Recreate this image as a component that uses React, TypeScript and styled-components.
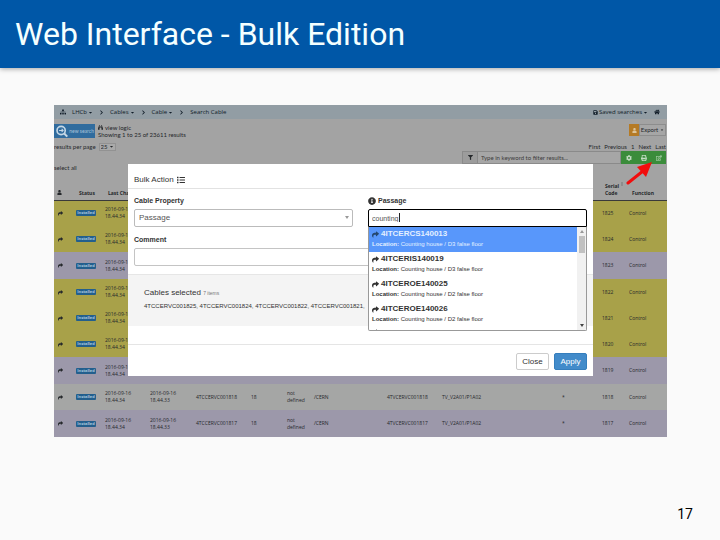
import React from "react";
import styled, { createGlobalStyle, css } from "styled-components";
import {
  FaBinoculars,
  FaCaretDown,
  FaChevronRight,
  FaCog,
  FaFilter,
  FaHome,
  FaInfoCircle,
  FaList,
  FaPrint,
  FaRegEdit,
  FaSave,
  FaShare,
  FaSitemap,
  FaUser,
} from "react-icons/fa";

const GlobalStyle = createGlobalStyle`
  * { box-sizing: border-box; }
  body { margin: 0; background: #fafafa; }
  button, input, select { font: inherit; color: inherit; margin: 0; }
`;

const Slide = styled.main`
  min-height: 100vh;
  display: flex;
  flex-direction: column;
  background: #fafafa;
  font-family: "Open Sans", sans-serif;
`;

const TitleBar = styled.header`
  display: flex;
  align-items: center;
  height: 68px;
  padding: 0 15px;
  background: #0057a7;
  box-shadow: 0 1px 5px rgba(0, 0, 0, 0.35);
`;

const Title = styled.h1`
  margin: 0;
  font: 400 32px/40px Roboto, sans-serif;
  color: #f4ffff;
`;

const PageNumber = styled.footer`
  margin-top: auto;
  padding: 0 27px 16px;
  text-align: right;
  font: 400 14px/20px Roboto, sans-serif;
  color: #000;
`;

const Figure = styled.section`
  position: relative;
  margin: 37px 53px 0 54px;
  overflow: hidden;
  background: #a3a3a3;
  color: #25282b;
  font-size: 6px;
  line-height: 8px;
`;

const Nav = styled.nav`
  display: flex;
  align-items: center;
  gap: 6px;
  height: 14px;
  padding: 0 7px 0 6px;
  background: #929da4;
  color: #101c28;
  svg { display: block; }
`;

const NavLink = styled.a`
  display: flex;
  align-items: center;
  gap: 1px;
  color: inherit;
  text-decoration: none;
`;

const Spacer = styled.span`
  flex: 1;
`;

const Tools = styled.div`
  display: flex;
  justify-content: space-between;
  height: 58px;
  padding-top: 5px;
  font-family: Lato, sans-serif;
`;

const ToolsLeft = styled.div`
  display: flex;
  flex-direction: column;
`;

const SearchRow = styled.div`
  display: flex;
  gap: 3px;
  height: 16px;
  white-space: nowrap;
`;

const NewSearch = styled.button`
  display: flex;
  align-items: center;
  gap: 1px;
  width: 41px;
  height: 14px;
  padding: 0 1px 0 2px;
  border: 0;
  background: #316c9e;
  color: #a9c3d8;
  font-size: 5px;
  white-space: nowrap;
`;

const SearchInfo = styled.div`
  display: flex;
  flex-direction: column;
`;

const ViewLogic = styled.a`
  display: flex;
  align-items: center;
  gap: 2px;
  height: 7px;
  color: inherit;
  text-decoration: none;
`;

const PerPage = styled.label`
  display: flex;
  align-items: center;
  gap: 3px;
  margin-top: 3px;
`;

const PerPageSelect = styled.select`
  width: 17px;
  height: 8px;
  padding: 0 1px;
  border: 1px solid #929292;
  background: #a9a9a9;
  appearance: none;
  line-height: 6px;
`;

const PerPageWrap = styled.span`
  position: relative;
  display: flex;
  svg { position: absolute; right: 2px; top: 1px; }
`;

const SelectAll = styled.a`
  margin-top: 13px;
  color: inherit;
  text-decoration: none;
`;

const ToolsRight = styled.div`
  display: flex;
  flex-direction: column;
  align-items: flex-end;
`;

const Export = styled.div`
  display: flex;
  height: 12px;
  margin-right: 1px;
`;

const ExportIcon = styled.span`
  display: grid;
  place-items: center;
  width: 10px;
  background: #b57a25;
  color: #dcc49b;
`;

const ExportButton = styled.button`
  display: flex;
  align-items: center;
  justify-content: center;
  gap: 2px;
  width: 27px;
  padding: 0;
  border: 1px solid #8d8d8d;
  background: #a6a6a6;
`;

const Pagination = styled.div`
  display: flex;
  gap: 4px;
  margin: 7px 1px 0 0;
  a { color: inherit; text-decoration: none; }
`;

const FilterRow = styled.div`
  display: flex;
  width: 204px;
  height: 13px;
  margin-right: 1px;
`;

const FilterIcon = styled.span`
  display: grid;
  place-items: center;
  width: 16px;
  border: 1px solid #8a8a8a;
  background: #9c9c9c;
`;

const FilterInput = styled.input`
  flex: 1;
  min-width: 0;
  padding: 0 3px;
  border: 1px solid #8a8a8a;
  border-left: 0;
  background: #a6a6a6;
  &::placeholder { color: #3c3c3c; opacity: 1; }
`;

const GreenButton = styled.button`
  display: grid;
  place-items: center;
  width: 15px;
  padding: 0;
  border: 0;
  background: #3b8c3b;
  color: #c3dcc3;
`;

const Table = styled.table`
  width: 100%;
  table-layout: fixed;
  border-collapse: collapse;
  th {
    height: 23px;
    padding: 0 0 3px 3px;
    border-bottom: 1px solid #3a3a3a;
    text-align: left;
    vertical-align: bottom;
    font-weight: 700;
    font-size: 5px;
    line-height: 7px;
    white-space: nowrap;
  }
  td {
    padding: 0;
    font-size: 5px;
    line-height: 7px;
    white-space: nowrap;
    vertical-align: middle;
  }
`;

const Sortable = styled.span`
  display: flex;
  justify-content: space-between;
  padding-right: 6px;
  &::after {
    content: "";
    width: 2px;
    height: 4px;
    margin-top: -1px;
    background: #8d8d8d;
  }
`;

const Col = styled.col<{ $w?: number }>`
  ${({ $w }) => $w && css`width: ${$w}px;`}
`;

type Tone = "yellow" | "purple" | "grey";
const tones = {
  yellow: css`background: #a8a149; height: 26px;`,
  purple: css`background: #9c98aa; height: 27px;`,
  grey: css`background: #a5a6a5; height: 26px;`,
};

const Row = styled.tr<{ $tone: Tone }>`
  ${({ $tone }) => tones[$tone]}
  svg { display: block; margin-left: 4px; }
`;

const Badge = styled.span`
  display: block;
  width: 20px;
  height: 6px;
  border-radius: 1px;
  background: #235f8d;
  color: #a9c6dc;
  font-weight: 700;
  font-size: 4px;
  line-height: 6px;
  text-align: center;
`;

const Arrow = styled.svg`
  position: absolute;
  top: 56px;
  right: 14px;
`;

const Modal = styled.div`
  position: absolute;
  top: 59px;
  left: 74px;
  right: 74px;
  background: #fff;
  color: #333;
  font: 7px/10px "Liberation Sans", Arial, sans-serif;
`;

const ModalHeader = styled.h2`
  display: flex;
  align-items: center;
  gap: 3px;
  height: 25px;
  margin: 0;
  padding: 7px 6px 0;
  border-bottom: 1px solid #e2e2e2;
  font-weight: 400;
  font-size: 8px;
`;

const ModalForm = styled.div`
  display: grid;
  grid-template-columns: 1fr 1fr;
  column-gap: 15px;
  row-gap: 8px;
  padding: 7px 6px 8px;
`;

const Field = styled.div<{ $wide?: boolean }>`
  position: relative;
  display: flex;
  flex-direction: column;
  gap: 3px;
  ${({ $wide }) => $wide && css`grid-column: 1 / -1;`}
`;

const Label = styled.label`
  display: flex;
  align-items: center;
  gap: 2px;
  font-weight: 700;
`;

const SelectWrap = styled.span`
  position: relative;
  display: block;
  svg { position: absolute; right: 4px; top: 7px; }
`;

const Select = styled.select`
  display: block;
  width: 100%;
  height: 18px;
  padding: 0 4px;
  border: 1px solid #bbb;
  border-radius: 2px;
  background: #fff;
  color: #555;
  appearance: none;
  font-size: 8px;
`;

const TextInput = styled.input<{ $active?: boolean }>`
  width: 100%;
  height: 18px;
  padding: 0 3px;
  border: 1px solid ${({ $active }) => ($active ? "#000" : "#c4c4c4")};
  border-radius: ${({ $active }) => ($active ? "2px 2px 0 0" : "2px")};
  background: #fff;
  color: #555;
  font-size: 7px;
  outline: 0;
`;

const Dropdown = styled.div`
  position: absolute;
  z-index: 1;
  top: 31px;
  left: 0;
  right: 0;
  display: flex;
  height: 104px;
  border: 1px solid #999;
  border-top: 0;
  border-radius: 0 0 2px 2px;
  background: #fff;
  overflow: hidden;
`;

const Caret = styled.span`
  position: absolute;
  top: 17px;
  left: 31px;
  width: 1px;
  height: 9px;
  background: #222;
`;

const Options = styled.ul`
  flex: 1;
  margin: 0;
  padding: 0;
  list-style: none;
`;

const Option = styled.li<{ $active?: boolean }>`
  height: 25px;
  padding: 2px 3px 0;
  font-size: 6px;
  line-height: 10px;
  ${({ $active }) => $active && css`background: #5897fb; color: #e4f0ff; svg { color: #24476f; }`}
`;

const OptionName = styled.strong`
  display: flex;
  align-items: center;
  gap: 2px;
  font-size: 8px;
  line-height: 10px;
`;

const Scrollbar = styled.div`
  display: flex;
  flex-direction: column;
  align-items: center;
  width: 9px;
  padding: 3px 1px;
  background: #f1f1f1;
  svg { flex: none; }
`;

const Thumb = styled.span`
  width: 6px;
  height: 17px;
  margin: 3px 0 auto;
  background: #c1c1c1;
`;

const Selected = styled.div`
  height: 52px;
  padding: 13px 16px 0;
  border-top: 1px solid #e6e6e6;
  background: #f4f4f4;
  font-size: 6px;
  white-space: nowrap;
  overflow: hidden;
`;

const SelectedTitle = styled.p`
  margin: 0 0 3px;
  font-size: 8px;
  small { font-size: 5px; color: #777; }
`;

const ModalFooter = styled.div`
  display: flex;
  justify-content: flex-end;
  gap: 5px;
  margin-top: 18px;
  padding: 8px 6px 6px;
  border-top: 1px solid #e5e5e5;
`;

const Button = styled.button<{ $primary?: boolean }>`
  width: 33px;
  height: 17px;
  padding: 0;
  border: 1px solid ${({ $primary }) => ($primary ? "#357ebd" : "#ccc")};
  border-radius: 2px;
  background: ${({ $primary }) => ($primary ? "#428bca" : "#fff")};
  color: ${({ $primary }) => ($primary ? "#fff" : "#333")};
  font-size: 8px;
`;

const columns = [22, 29, 45, 46, 55, 36, 27, 73, 55, 120, 40, 27];

const rows: { code: number; tone: Tone; detailed?: boolean }[] = [
  { code: 1825, tone: "yellow" },
  { code: 1824, tone: "yellow" },
  { code: 1823, tone: "purple" },
  { code: 1822, tone: "yellow" },
  { code: 1821, tone: "yellow" },
  { code: 1820, tone: "yellow" },
  { code: 1819, tone: "purple" },
  { code: 1818, tone: "grey", detailed: true },
  { code: 1817, tone: "purple", detailed: true },
];

const options = [
  { name: "4ITCERCS140013", place: "Counting house / D3 false floor" },
  { name: "4ITCERIS140019", place: "Counting house / D3 false floor" },
  { name: "4ITCEROE140025", place: "Counting house / D2 false floor" },
  { name: "4ITCEROE140026", place: "Counting house / D2 false floor" },
];

const SearchLogo = () => (
  <svg width="13" height="13" viewBox="0 0 12 12" fill="none" stroke="#c6d8e6">
    <circle cx="5" cy="5" r="4" strokeWidth="1.6" />
    <path d="M8 8l3 3" strokeWidth="2" />
    <path d="M3 5h3.500M5.500 3.500l1.500 1.500l-1.500 1.500" strokeWidth="1" />
  </svg>
);

const Triangle = ({ up, color = "#444" }: { up?: boolean; color?: string }) => (
  <svg width="4" height="3" viewBox="0 0 4 3">
    <path d={up ? "M0 3L2 0L4 3Z" : "M0 0L2 3L4 0Z"} fill={color} />
  </svg>
);

const Background = () => (
  <>
    <Nav>
      <NavLink href="#" aria-label="Site map"><FaSitemap size={6} /></NavLink>
      <NavLink href="#">LHCb <FaCaretDown size={5} /></NavLink>
      <FaChevronRight size={5} />
      <NavLink href="#">Cables <FaCaretDown size={5} /></NavLink>
      <FaChevronRight size={5} />
      <NavLink href="#">Cable <FaCaretDown size={5} /></NavLink>
      <FaChevronRight size={5} />
      <span>Search Cable</span>
      <Spacer />
      <NavLink href="#"><FaSave size={5} /> Saved searches <FaCaretDown size={5} /></NavLink>
      <NavLink href="#" aria-label="Home"><FaHome size={6} /></NavLink>
    </Nav>
    <Tools>
      <ToolsLeft>
        <SearchRow>
          <NewSearch><SearchLogo />new search</NewSearch>
          <SearchInfo>
            <ViewLogic href="#"><FaBinoculars size={5} />view logic</ViewLogic>
            <span>Showing 1 to 25 of 23611 results</span>
          </SearchInfo>
        </SearchRow>
        <PerPage>
          results per page
          <PerPageWrap>
            <PerPageSelect defaultValue="25"><option>25</option></PerPageSelect>
            <FaCaretDown size={5} />
          </PerPageWrap>
        </PerPage>
        <SelectAll href="#">select all</SelectAll>
      </ToolsLeft>
      <ToolsRight>
        <Export>
          <ExportIcon><FaUser size={5} /></ExportIcon>
          <ExportButton>Export <FaCaretDown size={4} /></ExportButton>
        </Export>
        <Pagination>
          <a href="#">First</a><a href="#">Previous</a><a href="#">1</a>
          <a href="#">Next</a><a href="#">Last</a>
        </Pagination>
        <FilterRow>
          <FilterIcon><FaFilter size={5} /></FilterIcon>
          <FilterInput aria-label="Filter" placeholder="Type in keyword to filter results..." />
          <GreenButton aria-label="Settings"><FaCog size={6} /></GreenButton>
          <GreenButton aria-label="Print"><FaPrint size={6} /></GreenButton>
          <GreenButton aria-label="Bulk edit"><FaRegEdit size={6} /></GreenButton>
        </FilterRow>
      </ToolsRight>
    </Tools>
    <Table>
      <colgroup>
        {columns.map((w, i) => <Col key={i} $w={w} />)}
        <Col />
      </colgroup>
      <thead>
        <tr>
          <th><FaUser size={5} /></th>
          <th>Status</th>
          <th>Last Change</th>
          <th colSpan={8} />
          <th><Sortable>Serial</Sortable>Code</th>
          <th>Function</th>
        </tr>
      </thead>
      <tbody>
        {rows.map(({ code, tone, detailed }) => (
          <Row key={code} $tone={tone}>
            <td><FaShare size={5} /></td>
            <td><Badge>Installed</Badge></td>
            <td>2016-09-16<br />18.44.34</td>
            {detailed ? (
              <>
                <td>2016-09-16<br />18.44.33</td>
                <td>4TCCERVC00{code}</td>
                <td>18</td>
                <td>not<br />defined</td>
                <td>/CERN</td>
                <td>4TVCERVC00{code}</td>
                <td>TV_V2A01/P1A02</td>
                <td>*</td>
              </>
            ) : (
              <td colSpan={8} />
            )}
            <td>{code}</td>
            <td>Control</td>
          </Row>
        ))}
      </tbody>
    </Table>
  </>
);

const BulkActionModal = () => (
  <Modal role="dialog" aria-label="Bulk Action">
    <ModalHeader>Bulk Action <FaList size={8} /></ModalHeader>
    <ModalForm>
      <Field>
        <Label htmlFor="property">Cable Property</Label>
        <SelectWrap>
          <Select id="property" defaultValue="Passage"><option>Passage</option></Select>
          <Triangle color="#999" />
        </SelectWrap>
      </Field>
      <Field>
        <Label htmlFor="passage"><FaInfoCircle size={8} />Passage</Label>
        <TextInput id="passage" $active defaultValue="counting" />
        <Caret />
        <Dropdown>
          <Options>
            {options.map(({ name, place }, i) => (
              <Option key={name} $active={i === 0}>
                <OptionName><FaShare size={7} />{name}</OptionName>
                <strong>Location:</strong> {place}
              </Option>
            ))}
            <Option><FaShare size={7} /></Option>
          </Options>
          <Scrollbar><Triangle up color="#999" /><Thumb /><Triangle /></Scrollbar>
        </Dropdown>
      </Field>
      <Field $wide>
        <Label htmlFor="comment">Comment</Label>
        <TextInput id="comment" />
      </Field>
    </ModalForm>
    <Selected>
      <SelectedTitle>Cables selected <small>7 items</small></SelectedTitle>
      4TCCERVC001825, 4TCCERVC001824, 4TCCERVC001822, 4TCCERVC001821,
    </Selected>
    <ModalFooter>
      <Button>Close</Button>
      <Button $primary>Apply</Button>
    </ModalFooter>
  </Modal>
);

export default function App() {
  return (
    <>
      <GlobalStyle />
      <Slide>
        <TitleBar><Title>Web Interface - Bulk Edition</Title></TitleBar>
        <Figure>
          <Background />
          <BulkActionModal />
          <Arrow width="27" height="24" viewBox="0 0 27 24">
            <path d="M2 22L17 10" stroke="#f20d0d" strokeWidth="3" strokeLinecap="round" />
            <path d="M26 1L11 6L20 16Z" fill="#f20d0d" />
          </Arrow>
        </Figure>
        <PageNumber>17</PageNumber>
      </Slide>
    </>
  );
}
